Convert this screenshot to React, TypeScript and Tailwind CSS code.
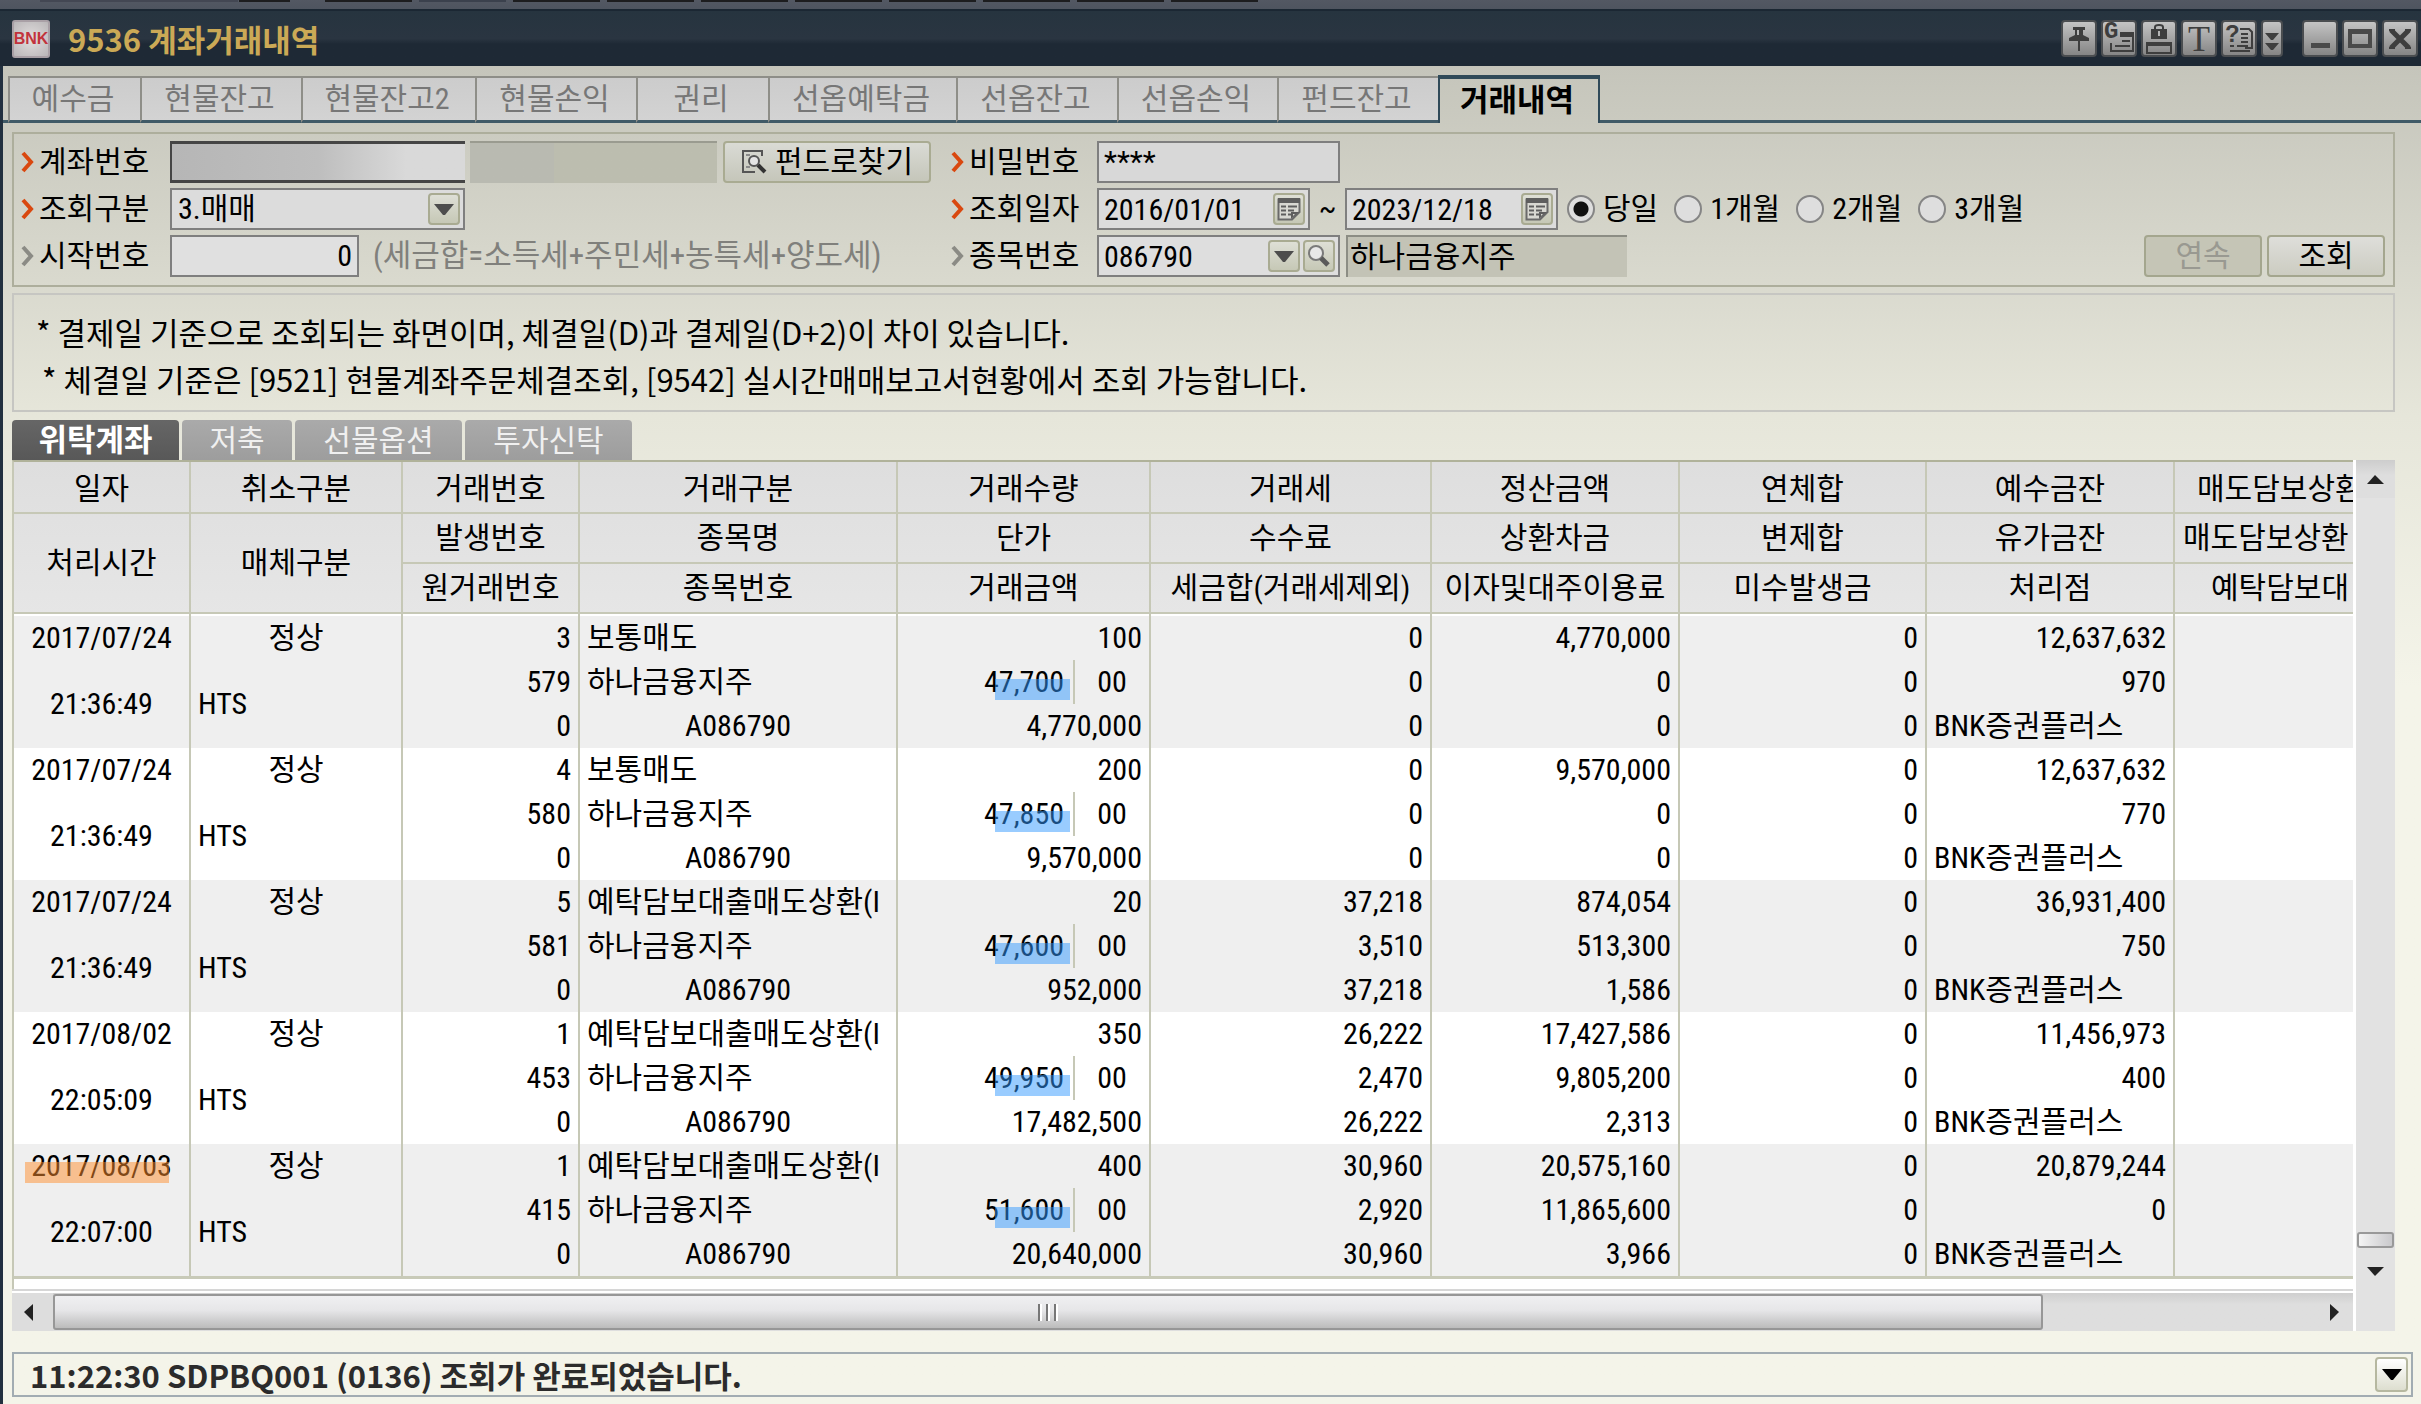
import { ReactNode } from "react";

const topSegments = [
  "w-[198px] bg-[#434753]",
  "w-[51px] bg-[#1d1d1f] ml-[1px]",
  "w-[87px] bg-[#1d1d1f] ml-[35px]",
  "w-[87px] bg-[#3b414d] ml-[7px]",
  "w-[87px] bg-[#1d1d1f] ml-[7px]",
  "w-[87px] bg-[#1d1d1f] ml-[7px]",
  "w-[87px] bg-[#1d1d1f] ml-[7px]",
  "w-[87px] bg-[#1d1d1f] ml-[7px]",
  "w-[87px] bg-[#1d1d1f] ml-[7px]",
  "w-[87px] bg-[#1d1d1f] ml-[7px]",
  "w-[87px] bg-[#1d1d1f] ml-[7px]",
  "w-[87px] bg-[#1d1d1f] ml-[7px]",
];

const mainTabs: [string, string][] = [
  ["예수금", "w-[132px]"],
  ["현물잔고", "w-[161px]"],
  ["현물잔고2", "w-[174px]"],
  ["현물손익", "w-[161px]"],
  ["권리", "w-[132px]"],
  ["선옵예탁금", "w-[188px]"],
  ["선옵잔고", "w-[161px]"],
  ["선옵손익", "w-[160px]"],
  ["펀드잔고", "w-[161px]"],
];

type Rec = {
  date: string;
  time: string;
  no: string[];
  kind: string;
  qty: string;
  price: string;
  amount: string;
  tax: string[];
  settle: string[];
  cash: string;
  stock: string;
  marked?: boolean;
};

const records: Rec[] = [
  { date: "2017/07/24", time: "21:36:49", no: ["3", "579", "0"], kind: "보통매도", qty: "100", price: "47,700", amount: "4,770,000", tax: ["0", "0", "0"], settle: ["4,770,000", "0", "0"], cash: "12,637,632", stock: "970" },
  { date: "2017/07/24", time: "21:36:49", no: ["4", "580", "0"], kind: "보통매도", qty: "200", price: "47,850", amount: "9,570,000", tax: ["0", "0", "0"], settle: ["9,570,000", "0", "0"], cash: "12,637,632", stock: "770" },
  { date: "2017/07/24", time: "21:36:49", no: ["5", "581", "0"], kind: "예탁담보대출매도상환(I", qty: "20", price: "47,600", amount: "952,000", tax: ["37,218", "3,510", "37,218"], settle: ["874,054", "513,300", "1,586"], cash: "36,931,400", stock: "750" },
  { date: "2017/08/02", time: "22:05:09", no: ["1", "453", "0"], kind: "예탁담보대출매도상환(I", qty: "350", price: "49,950", amount: "17,482,500", tax: ["26,222", "2,470", "26,222"], settle: ["17,427,586", "9,805,200", "2,313"], cash: "11,456,973", stock: "400" },
  { date: "2017/08/03", time: "22:07:00", no: ["1", "415", "0"], kind: "예탁담보대출매도상환(I", qty: "400", price: "51,600", amount: "20,640,000", tax: ["30,960", "2,920", "30,960"], settle: ["20,575,160", "11,865,600", "3,966"], cash: "20,879,244", stock: "0", marked: true },
];

function Chevron({ muted = false }: { muted?: boolean }) {
  return (
    <svg className="h-[24px] w-[14px] shrink-0" viewBox="0 0 14 24" aria-hidden="true">
      <path d="M2 3 L10 12 L2 21" fill="none" stroke={muted ? "#8b8b85" : "#d9480f"} strokeWidth="4" />
    </svg>
  );
}

function Label({ htmlFor, muted, children, width }: { htmlFor: string; muted?: boolean; children: ReactNode; width: string }) {
  return (
    <label htmlFor={htmlFor} className={`flex shrink-0 items-center gap-1 ${width}`}>
      <Chevron muted={muted} />
      {children}
    </label>
  );
}

function MiniButton({ label, children }: { label: string; children: ReactNode }) {
  return (
    <button type="button" aria-label={label} className="flex h-[32px] w-[32px] shrink-0 items-center justify-center rounded-[4px] border-2 border-[#a9ab92] bg-linear-to-b from-[#dedfd6] to-[#c6c8b6]">
      {children}
    </button>
  );
}

function Down({ color = "#4d4d4d" }: { color?: string }) {
  return (
    <svg className="h-[11px] w-[20px]" viewBox="0 0 20 11" aria-hidden="true">
      <path d="M0 0H20L11 11H9Z" fill={color} />
    </svg>
  );
}

function CalendarIcon() {
  return (
    <svg className="h-[24px] w-[24px]" viewBox="0 0 24 24" aria-hidden="true">
      <path d="M1.5 2.5H22.5V15L15 22.5H1.5Z" fill="#d8d8d2" stroke="#6a6a6a" strokeWidth="2" />
      <path d="M1 1H23V6H1Z" fill="#5e5e5e" />
      <path d="M4 9.5H9M11 9.5H20M4 13.5H9M11 13.5H17M4 17.5H9M11 17.5H14" stroke="#5e5e5e" strokeWidth="2" />
      <path d="M14 22V15H22Z" fill="#5e5e5e" />
      <path d="M16 19V17H18Z" fill="#d8d8d2" />
    </svg>
  );
}

function SearchGlass() {
  return (
    <svg className="h-[24px] w-[24px]" viewBox="0 0 24 24" aria-hidden="true">
      <circle cx="9" cy="9" r="7" fill="#e8e8e8" stroke="#7a7a7a" strokeWidth="2" />
      <path d="M14 14L21 21" stroke="#5a5a5a" strokeWidth="5" />
    </svg>
  );
}

function DocSearch() {
  return (
    <svg className="h-[26px] w-[26px]" viewBox="0 0 26 26" aria-hidden="true">
      <path d="M21 7V2H2V23H14" fill="none" stroke="#555" strokeWidth="2" />
      <path d="M5 6H9M5 18H9" stroke="#8a8a8a" strokeWidth="2" />
      <circle cx="13" cy="12" r="5" fill="#e4e4e4" stroke="#555" strokeWidth="2" />
      <path d="M17 16L24 23" stroke="#333" strokeWidth="4" />
    </svg>
  );
}

function WinButton({ label, wide = true, children }: { label: string; wide?: boolean; children: ReactNode }) {
  return (
    <button
      type="button"
      aria-label={label}
      className={`relative flex h-[37px] items-center justify-center overflow-hidden rounded-[4px] border-2 border-[#4a4d50] bg-linear-to-b from-[#c4c4c4] to-[#858585] ${wide ? "w-[36px]" : "w-[22px]"}`}
    >
      {children}
    </button>
  );
}

function DateField({ id, label, value }: { id: string; label: string; value: string }) {
  return (
    <div className="flex h-[42px] w-[213px] items-center border-2 border-[#7f7f7f] bg-[#dcdcdc] pr-[3px]">
      <input id={id} aria-label={label} defaultValue={value} className="h-full min-w-0 flex-1 bg-transparent pl-[5px] outline-none" />
      <MiniButton label={`${label} 달력`}>
        <CalendarIcon />
      </MiniButton>
    </div>
  );
}

function Period({ label, checked = false }: { label: string; checked?: boolean }) {
  return (
    <label className="flex items-center gap-[8px]">
      <input
        type="radio"
        name="period"
        defaultChecked={checked}
        className="h-[28px] w-[28px] appearance-none rounded-full border-2 border-[#858585] bg-[#dedede] checked:bg-[radial-gradient(circle,#111_0,#111_7px,#dedede_8px)]"
      />
      {label}
    </label>
  );
}

const line = "border-[#c6c8b6]";

function Th({ children, rows = 1, h = "h-[50px] pt-0", left = "" }: { children: ReactNode; rows?: number; h?: string; left?: string }) {
  return (
    <th rowSpan={rows} scope="col" className={`overflow-hidden whitespace-nowrap border-b-2 px-0 pb-0 font-normal ${line} ${h} ${left ? `text-left ${left}` : "border-r-2 text-center"}`}>
      {children}
    </th>
  );
}

function Td({ children, rows = 1, align = "text-right", last = false }: { children?: ReactNode; rows?: number; align?: string; last?: boolean }) {
  return (
    <td rowSpan={rows} className={`h-[44px] overflow-hidden whitespace-nowrap px-[7px] py-0 ${line} ${last ? "" : "border-r-2"} ${align}`}>
      {children}
    </td>
  );
}

function RecordRows({ r, striped }: { r: Rec; striped: boolean }) {
  return (
    <tbody className={striped ? "bg-[#efefef]" : "bg-white"}>
      <tr>
        <Td align="text-center">
          <span className="relative inline-block">
            {r.date}
            {r.marked && <span className="absolute -left-[6px] bottom-[1px] right-[3px] h-[21px] bg-[#ff9030]/50" />}
          </span>
        </Td>
        <Td align="text-center">정상</Td>
        <Td>{r.no[0]}</Td>
        <Td align="text-left">{r.kind}</Td>
        <Td>{r.qty}</Td>
        <Td>{r.tax[0]}</Td>
        <Td>{r.settle[0]}</Td>
        <Td>0</Td>
        <Td>{r.cash}</Td>
        <Td last />
      </tr>
      <tr>
        <Td rows={2} align="text-center">{r.time}</Td>
        <Td rows={2} align="text-left">HTS</Td>
        <Td>{r.no[1]}</Td>
        <Td align="text-left">하나금융지주</Td>
        <td className={`h-[44px] border-r-2 p-0 ${line}`}>
          <div className="flex h-[44px]">
            <span className={`relative flex flex-1 items-center justify-end border-r-2 pr-[9px] ${line}`}>
              {r.price}
              <span className="absolute bottom-[4px] right-[3px] h-[21px] w-[75px] bg-[#3399ff]/50" />
            </span>
            <span className="flex w-[74px] items-center justify-center">00</span>
          </div>
        </td>
        <Td>{r.tax[1]}</Td>
        <Td>{r.settle[1]}</Td>
        <Td>0</Td>
        <Td>{r.stock}</Td>
        <Td last />
      </tr>
      <tr>
        <Td>{r.no[2]}</Td>
        <Td align="text-center">A086790</Td>
        <Td>{r.amount}</Td>
        <Td>{r.tax[2]}</Td>
        <Td>{r.settle[2]}</Td>
        <Td>0</Td>
        <Td align="text-left">BNK증권플러스</Td>
        <Td last />
      </tr>
    </tbody>
  );
}

export default function App() {
  return (
    <div className="flex min-h-screen flex-col bg-[#f4f4e9] font-['Roboto_Condensed','Noto_Sans_CJK_KR',sans-serif] text-[30px] leading-[36px] text-black">
      <div className="flex h-[9px] bg-linear-to-b from-[#535863] to-[#4e545f] pl-[40px]">
        {topSegments.map((c, i) => (
          <span key={i} className={`h-[2px] ${c}`} />
        ))}
      </div>

      <header className="flex h-[57px] items-center border-t-2 border-[#1b2733] bg-linear-to-b from-[#26343f] from-0% via-[#2a3541] via-50% to-[#1e2935] to-60% pl-[12px] pr-[3px]">
        <div className="flex h-[38px] w-[38px] items-center justify-center rounded-[3px] border-2 border-[#a9a0a6] bg-[radial-gradient(circle,#e2dede,#b9b6b8)] font-['Liberation_Sans',sans-serif] text-[16px] font-bold leading-none text-[#c2333c]">
          BNK
        </div>
        <h1 className="ml-[18px] font-['Noto_Sans_CJK_KR',sans-serif] text-[31px] font-bold text-[#cba956]">9536 계좌거래내역</h1>
        <div className="ml-auto flex items-center gap-1">
          <WinButton label="고정">
            <svg className="h-[28px] w-[24px]" viewBox="0 0 24 28" aria-hidden="true">
              <path d="M6 2H18V5H16V10L22 13V16H2V13L8 10V5H6Z M11 16H13V26H11Z" fill="#3e3e3e" />
              <path d="M10 5H12V10H10Z" fill="#b5b5b5" />
            </svg>
          </WinButton>
          <WinButton label="그룹">
            <span className="absolute left-px top-0 font-['Liberation_Mono',monospace] text-[24px] font-bold leading-[20px] text-[#3e3e3e]">G</span>
            <svg className="h-[32px] w-[32px]" viewBox="0 0 32 32" aria-hidden="true">
              <path d="M18 10H30V28H8V20" fill="none" stroke="#3e3e3e" strokeWidth="2" />
              <path d="M17 9H31V14H17Z" fill="#3e3e3e" />
              <path d="M19 18H27M12 23H27" stroke="#3e3e3e" strokeWidth="2" />
            </svg>
          </WinButton>
          <WinButton label="잠금">
            <svg className="h-[32px] w-[30px]" viewBox="0 0 30 32" aria-hidden="true">
              <path d="M11 7V4Q11 2 15 2T19 4V7" fill="none" stroke="#3e3e3e" strokeWidth="2" />
              <path d="M7 6H23V16H7Z" fill="#3e3e3e" />
              <path d="M14 8H16V13H14Z" fill="#b5b5b5" />
              <path d="M3 20H27V30H3Z" fill="none" stroke="#3e3e3e" strokeWidth="2" />
              <path d="M2 19H28V23H2Z" fill="#3e3e3e" />
            </svg>
          </WinButton>
          <WinButton label="글꼴">
            <span className="font-['Liberation_Serif',serif] text-[36px] leading-[34px] text-[#3e3e3e]">T</span>
          </WinButton>
          <WinButton label="도움말">
            <span className="absolute left-[2px] top-0 font-['Liberation_Sans',sans-serif] text-[24px] font-bold leading-[24px] text-[#3e3e3e]">?</span>
            <svg className="h-[32px] w-[32px]" viewBox="0 0 32 32" aria-hidden="true">
              <path d="M17 6H26L29 9V25H22M7 28H27" fill="none" stroke="#3e3e3e" strokeWidth="2" />
              <path d="M18 11H25M18 15H25M18 19H25M7 23H11M14 23H25" stroke="#3e3e3e" strokeWidth="2" />
            </svg>
          </WinButton>
          <WinButton label="더보기" wide={false}>
            <svg className="mt-[6px] h-[20px] w-[14px]" viewBox="0 0 14 20" aria-hidden="true">
              <path d="M0 1H14L8 8H6Z M0 11H14L8 18H6Z" fill="#3e3e3e" />
            </svg>
          </WinButton>
          <div className="ml-[15px] flex gap-1">
            <WinButton label="최소화">
              <span className="mt-[14px] h-[5px] w-[19px] bg-[#4a4a4a]" />
            </WinButton>
            <WinButton label="최대화">
              <span className="h-[19px] w-[24px] border-[4px] border-[#4a4a4a] border-t-[5px]" />
            </WinButton>
            <WinButton label="닫기">
              <svg className="h-[20px] w-[24px]" viewBox="0 0 24 20" aria-hidden="true">
                <path d="M3 1L21 19M21 1L3 19" stroke="#3e3e3e" strokeWidth="5" />
                <path d="M1 1H7M17 1H23M1 19H7M17 19H23" stroke="#3e3e3e" strokeWidth="2" />
              </svg>
            </WinButton>
          </div>
        </div>
      </header>

      <main className="flex flex-1 flex-col border-l-[3px] border-[#22303f] bg-linear-to-b from-[#c5c5bb] via-[#e6e6da] via-[350px] to-[#f4f4e9] to-[620px] pb-[7px]">
        <nav className="mt-[9px] flex h-[48px] items-end text-[#777777]">
          <span className="w-[5px] border-b-[3px] border-[#405a67]" />
          {mainTabs.map(([t, w]) => (
            <button key={t} type="button" className={`h-[47px] shrink-0 border-b-[3px] border-l-2 border-t-2 border-b-[#405a67] border-l-[#8e8e88] border-t-[#8e8e88] bg-linear-to-b from-[#cccccc] to-[#d3d3d3] pr-1 ${w}`}>
              {t}
            </button>
          ))}
          <button type="button" aria-current="page" className="h-[48px] w-[162px] shrink-0 border-x-2 border-t-[4px] border-[#304a59] pr-1 text-[31px] font-bold text-black">
            거래내역
          </button>
          <span className="flex-1 border-b-[3px] border-[#405a67]" />
        </nav>

        <form className="ml-[9px] mr-[26px] mt-[9px] flex border-2 border-[#adae9c] pb-[8px] pl-[7px] pr-2 pt-[7px]" onSubmit={(e) => e.preventDefault()}>
          <div className="flex w-[930px] shrink-0 flex-col gap-[5px]">
            <div className="flex h-[42px]">
              <Label htmlFor="account" width="w-[149px]">계좌번호</Label>
              <input id="account" className="w-[295px] border-y-[3px] border-l-2 border-[#454545] bg-linear-to-r from-[#b6b6b6] via-[#bebebe] via-50% to-[#d9d9d9] to-80% outline-none" />
              <input aria-label="계좌명" readOnly className="ml-[5px] w-[247px] border-t-2 border-[#9a9b90] bg-linear-to-r from-[#b9bab1] from-34% to-[#bcbdaf] to-34% outline-none" />
              <button type="button" className="ml-[6px] flex w-[208px] items-center justify-center gap-2 rounded-[4px] border-2 border-[#a9ab92] bg-linear-to-b from-[#dadbd5] to-[#c5c6ba]">
                <DocSearch />
                펀드로찾기
              </button>
            </div>
            <div className="flex h-[42px]">
              <Label htmlFor="kind" width="w-[149px]">조회구분</Label>
              <div className="relative w-[295px]">
                <select id="kind" className="h-full w-full appearance-none border-2 border-[#7f7f7f] bg-[#dcdcdc] pl-[6px] outline-none">
                  <option>3.매매</option>
                </select>
                <span className="pointer-events-none absolute inset-y-[5px] right-[5px] flex w-[32px] items-center justify-center rounded-[4px] border-2 border-[#a9ab92] bg-linear-to-b from-[#dedfd6] to-[#c6c8b6]">
                  <Down />
                </span>
              </div>
            </div>
            <div className="flex h-[42px] items-stretch">
              <Label htmlFor="start" muted width="w-[149px]">시작번호</Label>
              <input id="start" defaultValue="0" className="w-[189px] border-2 border-[#7f7f7f] bg-[#e0e0e0] pr-[5px] text-right outline-none" />
              <span className="ml-[14px] flex items-center text-[31px] text-[#80807c]">(세금합=소득세+주민세+농특세+양도세)</span>
            </div>
          </div>

          <div className="flex flex-1 flex-col gap-[5px]">
            <div className="flex h-[42px]">
              <Label htmlFor="pw" width="w-[146px]">비밀번호</Label>
              <input id="pw" defaultValue="****" className="w-[243px] border-2 border-[#7f7f7f] bg-[#d8d8d8] pl-[5px] outline-none" />
            </div>
            <div className="flex h-[42px] items-center">
              <Label htmlFor="from" width="w-[146px]">조회일자</Label>
              <DateField id="from" label="시작일" value="2016/01/01" />
              <span className="w-[35px] text-center">~</span>
              <DateField id="to" label="종료일" value="2023/12/18" />
              <div className="ml-[9px] flex gap-[16px]">
                <Period label="당일" checked />
                <Period label="1개월" />
                <Period label="2개월" />
                <Period label="3개월" />
              </div>
            </div>
            <div className="flex h-[42px]">
              <Label htmlFor="code" muted width="w-[146px]">종목번호</Label>
              <div className="flex w-[243px] items-center gap-[3px] border-2 border-[#7f7f7f] bg-[#dedede] pr-[3px]">
                <input id="code" defaultValue="086790" className="h-full min-w-0 flex-1 bg-transparent pl-[5px] outline-none" />
                <MiniButton label="종목 목록"><Down /></MiniButton>
                <MiniButton label="종목 찾기"><SearchGlass /></MiniButton>
              </div>
              <input aria-label="종목명" readOnly defaultValue="하나금융지주" className="ml-[6px] w-[281px] border-l-2 border-t-2 border-[#8c8d84] bg-[#c3c3b6] pl-[2px] outline-none" />
              <button type="button" disabled className="ml-auto w-[118px] rounded-[4px] border-2 border-[#a4a68e] bg-[#c5c5b6] text-[#999991]">연속</button>
              <button type="submit" className="ml-[5px] w-[118px] rounded-[4px] border-2 border-[#a4a68e] bg-linear-to-b from-[#dededa] to-[#ccccc1]">조회</button>
            </div>
          </div>
        </form>

        <section className="ml-[9px] mr-[26px] mt-[6px] border-2 border-[#c6c6c2] pb-[8px] pl-[22px] pt-[13px] font-['Noto_Sans_CJK_KR',sans-serif] text-[31px] leading-[47px]">
          <p>* 결제일 기준으로 조회되는 화면이며, 체결일(D)과 결제일(D+2)이 차이 있습니다.</p>
          <p className="pl-[6px]">* 체결일 기준은 [9521] 현물계좌주문체결조회, [9542] 실시간매매보고서현황에서 조회 가능합니다.</p>
        </section>

        <div className="ml-[9px] mt-[8px] flex h-[40px] gap-[3px] text-[#f0f0f0]">
          <button type="button" aria-current="page" className="w-[167px] rounded-t-[4px] bg-linear-to-b from-[#666666] to-[#585858] pt-[2px] text-[31px] font-bold text-white">위탁계좌</button>
          <button type="button" className="w-[110px] rounded-t-[4px] bg-linear-to-b from-[#aaaaaa] to-[#9d9d9d] pt-[2px]">저축</button>
          <button type="button" className="w-[167px] rounded-t-[4px] bg-linear-to-b from-[#aaaaaa] to-[#9d9d9d] pt-[2px]">선물옵션</button>
          <button type="button" className="w-[167px] rounded-t-[4px] bg-linear-to-b from-[#aaaaaa] to-[#9d9d9d] pt-[2px]">투자신탁</button>
        </div>

        <div className="ml-[9px] mr-[26px] flex">
          <div className="min-w-0 flex-1">
            <div className="border-l-2 border-t-2 border-l-[#c6c8b6] border-t-[#b0b29a] bg-white pb-[10px]">
              <table className="w-full table-fixed border-separate border-spacing-0">
                <colgroup>
                  <col className="w-[177px]" />
                  <col className="w-[212px]" />
                  <col className="w-[177px]" />
                  <col className="w-[318px]" />
                  <col className="w-[253px]" />
                  <col className="w-[281px]" />
                  <col className="w-[248px]" />
                  <col className="w-[247px]" />
                  <col className="w-[248px]" />
                  <col />
                </colgroup>
                <thead className="bg-linear-to-b from-[#dedede] to-[#e6e6e6]">
                  <tr>
                    <Th h="h-[52px] pt-1">일자</Th>
                    <Th h="h-[52px] pt-1">취소구분</Th>
                    <Th h="h-[52px] pt-1">거래번호</Th>
                    <Th h="h-[52px] pt-1">거래구분</Th>
                    <Th h="h-[52px] pt-1">거래수량</Th>
                    <Th h="h-[52px] pt-1">거래세</Th>
                    <Th h="h-[52px] pt-1">정산금액</Th>
                    <Th h="h-[52px] pt-1">연체합</Th>
                    <Th h="h-[52px] pt-1">예수금잔</Th>
                    <Th h="h-[52px] pt-1" left="pl-[22px]">매도담보상환</Th>
                  </tr>
                  <tr>
                    <Th rows={2}>처리시간</Th>
                    <Th rows={2}>매체구분</Th>
                    <Th>발생번호</Th>
                    <Th>종목명</Th>
                    <Th>단가</Th>
                    <Th>수수료</Th>
                    <Th>상환차금</Th>
                    <Th>변제합</Th>
                    <Th>유가금잔</Th>
                    <Th left="pl-[8px]">매도담보상환</Th>
                  </tr>
                  <tr>
                    <Th>원거래번호</Th>
                    <Th>종목번호</Th>
                    <Th>거래금액</Th>
                    <Th>세금합(거래세제외)</Th>
                    <Th>이자및대주이용료</Th>
                    <Th>미수발생금</Th>
                    <Th>처리점</Th>
                    <Th left="pl-[36px]">예탁담보대</Th>
                  </tr>
                </thead>
                <tbody aria-hidden="true">
                  <tr>
                    {Array.from({ length: 10 }, (_, i) => (
                      <td key={i} className={`h-[2px] bg-white p-0 ${line} ${i < 9 ? "border-r-2" : ""}`} />
                    ))}
                  </tr>
                </tbody>
                {records.map((r, i) => (
                  <RecordRows key={i} r={r} striped={i % 2 === 0} />
                ))}
              </table>
              <div className="h-[3px] bg-[#c8cab8]" />
            </div>
            <div className="h-[4px] border-t-2 border-[#d6d6d6] bg-white" />
            <div className="flex h-[38px] items-center bg-linear-to-b from-[#cfcfcf] to-[#dedede] to-30%">
              <button type="button" aria-label="왼쪽" className="flex h-full w-[41px] items-center justify-center bg-[#dddddd] pr-[8px]">
                <svg className="h-[17px] w-[9px]" viewBox="0 0 9 17" aria-hidden="true"><path d="M9 0V17L0 8Z" fill="#222" /></svg>
              </button>
              <div className="flex h-[36px] w-[85%] items-center justify-center gap-[4px] rounded-[3px] border-2 border-[#979797] bg-linear-to-b from-[#f0f0f2] from-0% via-[#e6e6e8] via-45% to-[#bcbcbc] to-100%">
                <span className="h-[17px] w-[4px] border-l-2 border-[#777777] bg-white" />
                <span className="h-[17px] w-[4px] border-l-2 border-[#777777] bg-white" />
                <span className="h-[17px] w-[4px] border-l-2 border-[#777777] bg-white" />
              </div>
              <button type="button" aria-label="오른쪽" className="ml-auto flex h-full w-[38px] items-center justify-center">
                <svg className="h-[17px] w-[9px]" viewBox="0 0 9 17" aria-hidden="true"><path d="M0 0V17L9 8Z" fill="#222" /></svg>
              </button>
            </div>
          </div>
          <div className="flex w-[42px] shrink-0 flex-col border-l-[3px] border-white bg-[#e2e2e2]">
            <button type="button" aria-label="위로" className="flex h-[38px] items-center justify-center bg-linear-to-b from-[#cdcdcd] to-[#dedede] to-40%">
              <svg className="h-[9px] w-[17px]" viewBox="0 0 17 9" aria-hidden="true"><path d="M0 9H17L8 0Z" fill="#222" /></svg>
            </button>
            <div className="flex-1" />
            <div className="mx-px h-[16px] rounded-[3px] border-2 border-[#999999] bg-linear-to-r from-[#f4f4f4] to-[#c9c9cc]" />
            <button type="button" aria-label="아래로" className="mb-[42px] flex h-[41px] items-center justify-center">
              <svg className="mt-[6px] h-[9px] w-[17px]" viewBox="0 0 17 9" aria-hidden="true"><path d="M0 0H17L8 9Z" fill="#222" /></svg>
            </button>
          </div>
        </div>

        <footer className="ml-[9px] mr-[8px] mt-[21px] flex h-[45px] items-center border-2 border-[#a2acb2] pl-[16px] pr-[3px]">
          <p className="font-['Noto_Sans_CJK_KR',sans-serif] text-[31px] font-bold text-[#2b2b2b]">11:22:30 SDPBQ001 (0136) 조회가 완료되었습니다.</p>
          <button type="button" aria-label="메시지 목록" className="ml-auto flex h-[35px] w-[33px] items-center justify-center rounded-[4px] border-2 border-[#b6b8a0] bg-linear-to-b from-white to-[#dddecf]">
            <Down color="#000" />
          </button>
        </footer>
      </main>
    </div>
  );
}
